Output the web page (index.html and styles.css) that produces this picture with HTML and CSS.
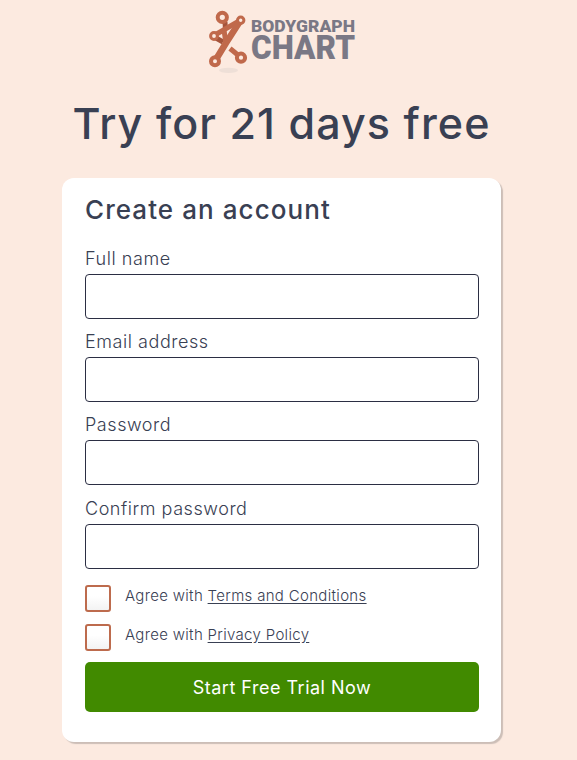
FILE: index.html
```html
<!DOCTYPE html>
<html lang="en">
  <head>
    <meta charset="utf-8">
    <title>Bodygraph Chart - Free Trial</title>
    <link rel="stylesheet" href="styles.css">
  </head>
  <body>
    <header class="header">
      <svg class="logo" width="150" height="68" viewBox="207 8 150 68" role="img" aria-label="Bodygraph Chart">
        <ellipse class="logo-shadow" cx="228.5" cy="70.3" rx="9.5" ry="2.6"/>
        <g class="logo-bones">
          <path class="dark" d="M225 22 L225.5 30"/>
          <path class="dark" d="M216 38 L223 42"/>
          <path d="M240 20.5 L214 35.5"/>
          <path class="leg" d="M230 48.5 L241 57.5"/>
          <path class="spine" d="M239.5 22 L226 43 L215 61"/>
          <path d="M224 30 L226 44"/>
        </g>
        <g class="logo-joints">
          <circle cx="222.3" cy="17.3" r="4.6"/>
          <circle class="small" cx="240.7" cy="20.2" r="3.2"/>
          <circle class="small" cx="214" cy="36" r="3.4"/>
          <circle cx="215" cy="61.3" r="4"/>
          <circle cx="241" cy="57.7" r="4.1"/>
        </g>
        <text class="logo-text" x="251" y="31.5" font-size="16.5" textLength="104" lengthAdjust="spacingAndGlyphs">BODYGRAPH</text>
        <text class="logo-text" x="251" y="58.6" font-size="32.5" textLength="104" lengthAdjust="spacingAndGlyphs">CHART</text>
      </svg>
      <h1>Try for 21 days free</h1>
    </header>
    <form class="card">
      <h2>Create an account</h2>
      <div class="field">
        <label for="name">Full name</label>
        <input type="text" id="name">
      </div>
      <div class="field">
        <label for="email">Email address</label>
        <input type="email" id="email">
      </div>
      <div class="field">
        <label for="password">Password</label>
        <input type="password" id="password">
      </div>
      <div class="field">
        <label for="confirm">Confirm password</label>
        <input type="password" id="confirm">
      </div>
      <div class="agree">
        <input type="checkbox" id="terms">
        <label for="terms">Agree with <a href="#">Terms and Conditions</a></label>
      </div>
      <div class="agree">
        <input type="checkbox" id="privacy">
        <label for="privacy">Agree with <a href="#">Privacy Policy</a></label>
      </div>
      <button type="submit" class="submit">Start Free Trial Now</button>
    </form>
  </body>
</html>
```

FILE: styles.css
```css
* {
  box-sizing: border-box;
}

body {
  margin: 0;
  height: 760px;
  overflow: hidden;
  background: #fceae0;
  color: #394053;
  font-family: Inter, "Open Sans", sans-serif;
}

.header {
  display: flex;
  flex-direction: column;
  align-items: center;
  width: 439px;
  margin-left: 62px;
  padding-top: 8px;
}

.logo {
  display: block;
  overflow: visible;
}

.logo-shadow {
  fill: #eedfd7;
}

.logo-bones path {
  fill: none;
  stroke: #c0694b;
  stroke-width: 5;
}

.logo-bones .spine {
  stroke-width: 6.5;
}

.logo-bones .dark {
  stroke: #a5543b;
}

.logo-joints circle {
  fill: #fceae0;
  stroke: #c0694b;
  stroke-width: 4;
}

.logo-joints .small {
  stroke-width: 3;
}

.logo-text {
  fill: #7a7885;
  font-family: Roboto, sans-serif;
  font-weight: 900;
}

h1 {
  margin: 19px 0 0;
  font-size: 43px;
  line-height: 56px;
  font-weight: 500;
  letter-spacing: 1.08px;
  white-space: nowrap;
}

.card {
  display: flex;
  flex-direction: column;
  width: 439px;
  height: 564px;
  margin: 27px 0 0 62px;
  padding: 16px 22px 0 23px;
  background: #fff;
  border-radius: 12px;
  box-shadow: 2px 2px 1px #ccbeb7;
}

h2 {
  margin: 0 0 15.7px;
  font-size: 26px;
  line-height: 32px;
  font-weight: 500;
  letter-spacing: 1.07px;
}

.field {
  height: 83.33px;
}

.field label {
  display: block;
  height: 32px;
  padding-top: 5px;
  font-size: 18px;
  line-height: 24px;
  font-weight: 300;
  letter-spacing: 0.55px;
}

.field input {
  display: block;
  width: 100%;
  height: 45px;
  padding: 0 12px;
  background: #fff;
  border: 1px solid #2b2e43;
  border-radius: 4px;
}

.agree {
  display: flex;
  height: 39px;
  padding-top: 10px;
  font-size: 15px;
  font-weight: 300;
  letter-spacing: 0.32px;
}

.agree input {
  appearance: none;
  width: 26px;
  height: 27px;
  margin: 0 14px 0 0;
  background: linear-gradient(#fff 40%, #f3f3f3);
  border: 2px solid #bd6b4d;
  border-radius: 3px;
}

.agree label {
  line-height: 22px;
}

.agree a {
  color: inherit;
  text-underline-offset: 2px;
}

.submit {
  height: 50px;
  margin-top: 9px;
  background: #418a00;
  border: 0;
  border-radius: 5px;
  color: #fff;
  font-family: inherit;
  font-size: 18px;
  letter-spacing: 0.5px;
}
```
